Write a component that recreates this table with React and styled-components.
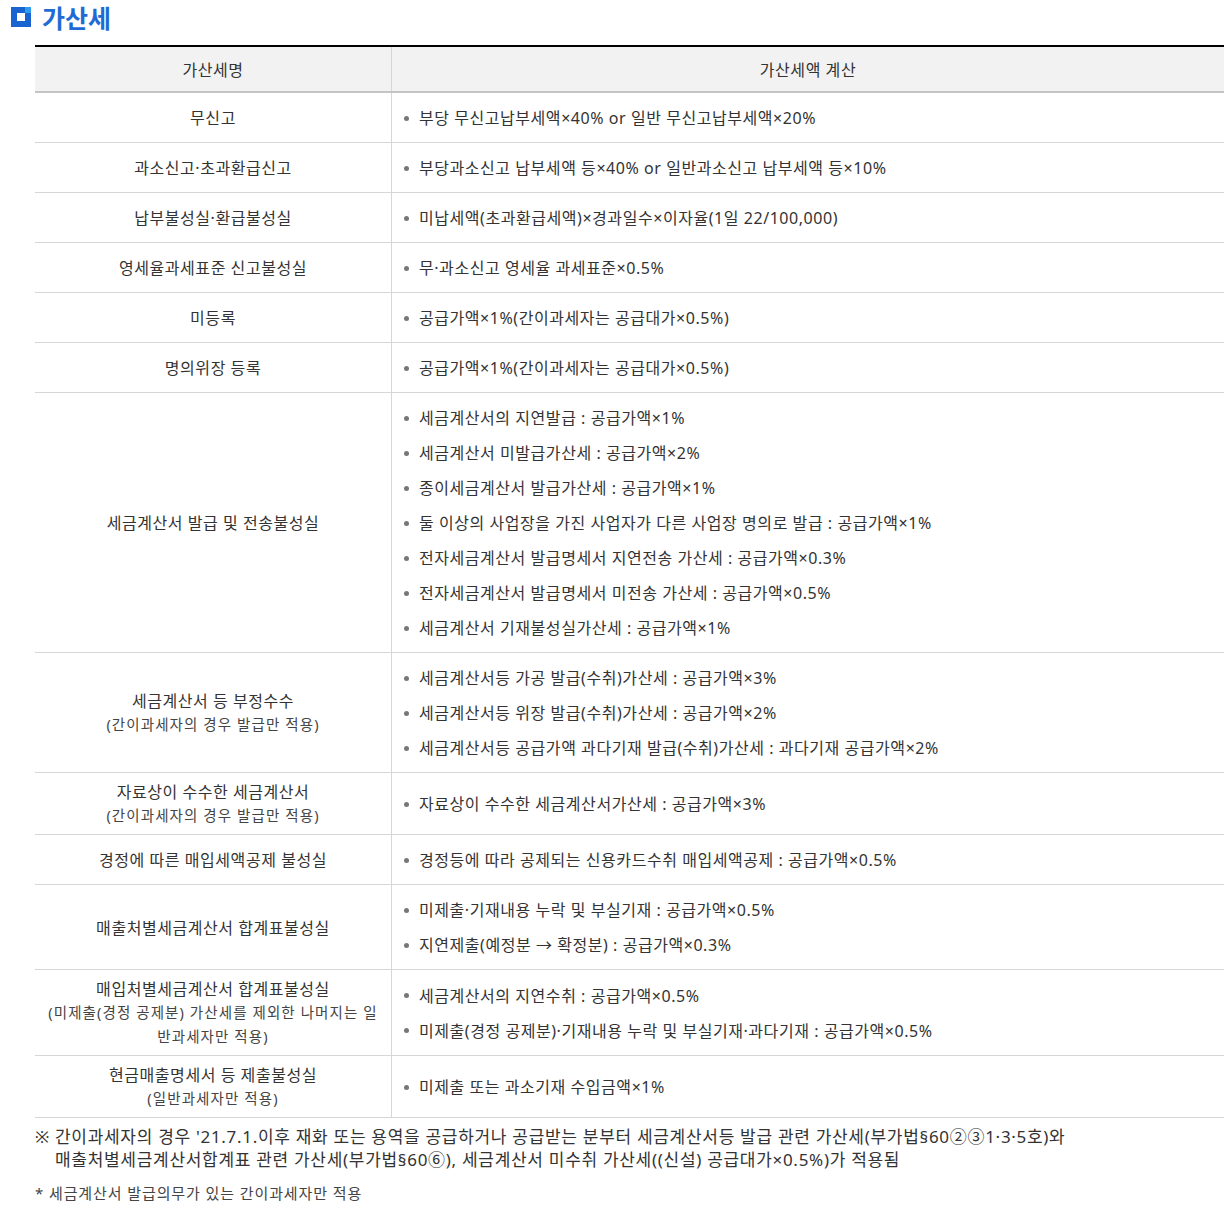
import React from 'react';
import styled, { createGlobalStyle } from 'styled-components';

const GlobalStyle = createGlobalStyle`
  body {
    margin: 0;
    background: #fff;
    font-family: "Noto Sans", "Noto Sans CJK KR", sans-serif;
    color: #333;
  }
`;

const Page = styled.div`
  width: 1230px;
  padding: 0 6px 20px 0;
  box-sizing: border-box;
`;

const Title = styled.h3`
  display: flex;
  align-items: center;
  gap: 11px;
  margin: 0;
  padding: 2px 0 0 11px;
  height: 30px;
  font-family: "Noto Sans CJK KR", sans-serif;
  font-size: 25px;
  font-weight: 700;
  color: #1f6bd6;
`;

const Body = styled.div`
  padding-left: 35px;
  margin-top: 13px;
`;

const Table = styled.table`
  width: 100%;
  border-collapse: collapse;
  border-top: 2px solid #000;
  font-size: 16px;
  letter-spacing: 0.55px;
`;

const Th = styled.th`
  height: 44px;
  padding: 0;
  background: #f2f2f2;
  font-weight: 400;
  border-bottom: 2px solid #c4c4c4;
  border-left: ${p => (p.$first ? 'none' : '1px solid #d6d6d6')};
  width: ${p => p.$width || 'auto'};
`;

const NameCell = styled.td`
  padding: 8px 10px 7px;
  text-align: center;
  vertical-align: middle;
  border-bottom: 1px solid #d6d6d6;
  line-height: 22px;
`;

const Sub = styled.div`
  font-size: 14.5px;
  line-height: 24px;
  letter-spacing: 1.1px;
  color: #444;
  word-break: break-all;
`;

const CalcCell = styled.td`
  padding: 8px 10px 7px 12px;
  vertical-align: middle;
  border-bottom: 1px solid #d6d6d6;
  border-left: 1px solid #d6d6d6;
`;

const List = styled.ul`
  list-style: none;
  margin: 0;
  padding: 4px 0;
  display: flex;
  flex-direction: column;
  gap: 9px;
`;

const Item = styled.li`
  display: flex;
  align-items: center;
  line-height: 26px;
  &::before {
    content: '';
    width: 5px;
    height: 5px;
    border-radius: 50%;
    background: #777;
    margin-right: 10px;
    flex: none;
  }
`;

const Notes = styled.div`
  padding-top: 7px;
`;

const Note = styled.p`
  margin: 0;
  display: flex;
  font-size: 17px;
  line-height: 23px;
  letter-spacing: 0.7px;
`;

const Mark = styled.span`
  flex: none;
  width: 20px;
`;

const Small = styled.p`
  margin: 12px 0 0;
  font-size: 15px;
  line-height: 20px;
  color: #444;
  letter-spacing: 0.9px;
`;

const TitleIcon = () => (
  <svg width="20" height="20" viewBox="0 0 20 20">
    <rect x="0" y="0" width="20" height="20" fill="#1a64d2" />
    <rect x="14" y="0" width="6" height="6" fill="#2f9cf0" />
    <rect x="6" y="6" width="8" height="8" fill="#fff" />
  </svg>
);

const rows = [
  { name: '무신고', items: ['부당 무신고납부세액×40% or 일반 무신고납부세액×20%'] },
  { name: '과소신고·초과환급신고', items: ['부당과소신고 납부세액 등×40% or 일반과소신고 납부세액 등×10%'] },
  { name: '납부불성실·환급불성실', items: ['미납세액(초과환급세액)×경과일수×이자율(1일 22/100,000)'] },
  { name: '영세율과세표준 신고불성실', items: ['무·과소신고 영세율 과세표준×0.5%'] },
  { name: '미등록', items: ['공급가액×1%(간이과세자는 공급대가×0.5%)'] },
  { name: '명의위장 등록', items: ['공급가액×1%(간이과세자는 공급대가×0.5%)'] },
  {
    name: '세금계산서 발급 및 전송불성실',
    items: [
      '세금계산서의 지연발급 : 공급가액×1%',
      '세금계산서 미발급가산세 : 공급가액×2%',
      '종이세금계산서 발급가산세 : 공급가액×1%',
      '둘 이상의 사업장을 가진 사업자가 다른 사업장 명의로 발급 : 공급가액×1%',
      '전자세금계산서 발급명세서 지연전송 가산세 : 공급가액×0.3%',
      '전자세금계산서 발급명세서 미전송 가산세 : 공급가액×0.5%',
      '세금계산서 기재불성실가산세 : 공급가액×1%',
    ],
  },
  {
    name: '세금계산서 등 부정수수',
    sub: '(간이과세자의 경우 발급만 적용)',
    items: [
      '세금계산서등 가공 발급(수취)가산세 : 공급가액×3%',
      '세금계산서등 위장 발급(수취)가산세 : 공급가액×2%',
      '세금계산서등 공급가액 과다기재 발급(수취)가산세 : 과다기재 공급가액×2%',
    ],
  },
  {
    name: '자료상이 수수한 세금계산서',
    sub: '(간이과세자의 경우 발급만 적용)',
    items: ['자료상이 수수한 세금계산서가산세 : 공급가액×3%'],
  },
  { name: '경정에 따른 매입세액공제 불성실', items: ['경정등에 따라 공제되는 신용카드수취 매입세액공제 : 공급가액×0.5%'] },
  {
    name: '매출처별세금계산서 합계표불성실',
    items: ['미제출·기재내용 누락 및 부실기재 : 공급가액×0.5%', '지연제출(예정분 → 확정분) : 공급가액×0.3%'],
  },
  {
    name: '매입처별세금계산서 합계표불성실',
    sub: '(미제출(경정 공제분) 가산세를 제외한 나머지는 일반과세자만 적용)',
    items: ['세금계산서의 지연수취 : 공급가액×0.5%', '미제출(경정 공제분)·기재내용 누락 및 부실기재·과다기재 : 공급가액×0.5%'],
  },
  {
    name: '현금매출명세서 등 제출불성실',
    sub: '(일반과세자만 적용)',
    items: ['미제출 또는 과소기재 수입금액×1%'],
  },
];

const App = () => (
  <Page>
    <GlobalStyle />
    <Title>
      <TitleIcon />
      가산세
    </Title>
    <Body>
      <Table>
        <thead>
          <tr>
            <Th $first $width="356px">가산세명</Th>
            <Th>가산세액 계산</Th>
          </tr>
        </thead>
        <tbody>
          {rows.map(row => (
            <tr key={row.name}>
              <NameCell>
                {row.name}
                {row.sub && <Sub>{row.sub}</Sub>}
              </NameCell>
              <CalcCell>
                <List>
                  {row.items.map(item => (
                    <Item key={item}>{item}</Item>
                  ))}
                </List>
              </CalcCell>
            </tr>
          ))}
        </tbody>
      </Table>
      <Notes>
        <Note>
          <Mark>※</Mark>
          <span>
            간이과세자의 경우 '21.7.1.이후 재화 또는 용역을 공급하거나 공급받는 분부터 세금계산서등 발급 관련 가산세(부가법§60②③1·3·5호)와
            <br />
            매출처별세금계산서합계표 관련 가산세(부가법§60⑥), 세금계산서 미수취 가산세((신설) 공급대가×0.5%)가 적용됨
          </span>
        </Note>
        <Small>* 세금계산서 발급의무가 있는 간이과세자만 적용</Small>
      </Notes>
    </Body>
  </Page>
);

export default App;
